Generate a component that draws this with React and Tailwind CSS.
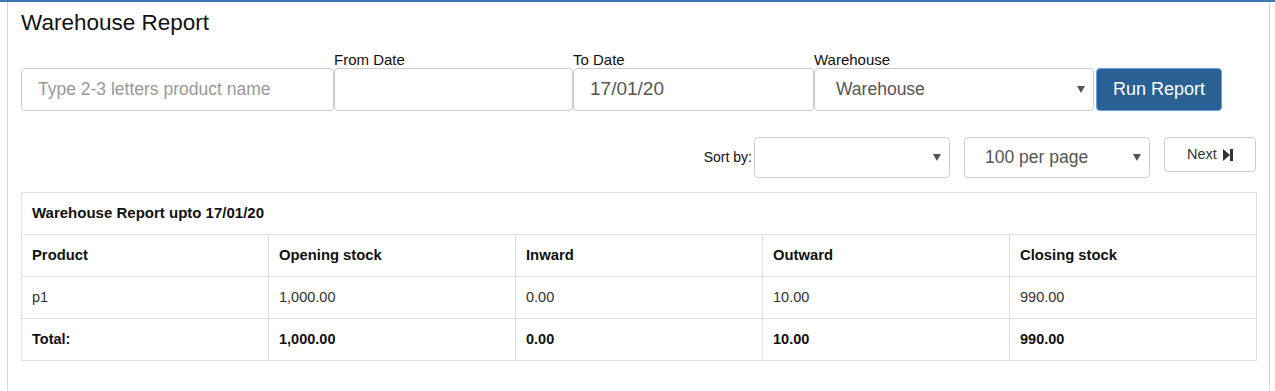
import React from "react";

function Arrow() {
  return (
    <svg width="8" height="7" viewBox="0 0 8 7" className="shrink-0">
      <polygon points="0,0 8,0 4,7" fill="#555" />
    </svg>
  );
}

function StepForward() {
  return (
    <svg width="10" height="12" viewBox="0 0 10 12" className="shrink-0">
      <polygon points="0,0 7,6 0,12" fill="#333" />
      <rect x="7" y="0" width="3" height="12" fill="#333" />
    </svg>
  );
}

const rows = [
  ["p1", "1,000.00", "0.00", "10.00", "990.00"],
];

export default function App() {
  return (
    <div className="w-[1275px] h-[391px] bg-white font-['Liberation_Sans',Arial,sans-serif] text-[#333] overflow-hidden">
      <div className="h-[2px] bg-[#3c78b4]" />
      <div className="ml-[7px] w-[1263px] h-[389px] border-x border-[#d2d6de] pl-[13px] pr-[11px]">
        <div className="pt-[7px] text-[22.5px] leading-[28px] text-[#111]">Warehouse Report</div>

        <div className="mt-[14px] flex items-end">
          <div className="w-[313px] h-[43px] border border-[#ccc] rounded-[4px] flex items-center pl-[16px] text-[17.5px] text-[#999]">
            Type 2-3 letters product name
          </div>
          <div className="w-[239px] flex flex-col">
            <div className="text-[15px] leading-[17px] text-[#111]">From Date</div>
            <div className="h-[43px] border border-[#ccc] rounded-[4px]" />
          </div>
          <div className="w-[241px] flex flex-col">
            <div className="text-[15px] leading-[17px] text-[#111]">To Date</div>
            <div className="h-[43px] border border-[#ccc] rounded-[4px] flex items-center pl-[16px] text-[19px] text-[#555]">
              17/01/20
            </div>
          </div>
          <div className="w-[280px] flex flex-col">
            <div className="text-[15px] leading-[17px] text-[#111]">Warehouse</div>
            <div className="h-[43px] border border-[#ccc] rounded-[4px] flex items-center justify-between pl-[21px] pr-[8px] text-[17.5px] text-[#555]">
              <span>Warehouse</span>
              <Arrow />
            </div>
          </div>
          <div className="ml-[2px] w-[126px] h-[43px] rounded-[4px] bg-[#2a6194] border border-[#66a0e6] flex items-center justify-center text-white text-[18px]">
            Run Report
          </div>
        </div>

        <div className="mt-[26px] flex justify-end items-start pr-[2px]">
          <div className="flex items-center">
            <span className="text-[14px] text-[#111] mr-[2px]">Sort by:</span>
            <div className="w-[196px] h-[41px] border border-[#ccc] rounded-[4px] flex items-center justify-end pr-[8px]">
              <Arrow />
            </div>
          </div>
          <div className="ml-[14px] w-[186px] h-[41px] border border-[#ccc] rounded-[4px] flex items-center justify-between pl-[20px] pr-[8px] text-[17.5px] text-[#555]">
            <span>100 per page</span>
            <Arrow />
          </div>
          <div className="ml-[14px] w-[92px] h-[35px] border border-[#ccc] rounded-[4px] flex items-center justify-center gap-[6px] text-[14.5px] text-[#333]">
            <span>Next</span>
            <StepForward />
          </div>
        </div>

        <table className="mt-[14px] w-[1236px] table-fixed border-collapse text-[14.5px]">
          <tbody>
            <tr>
              <th colSpan={5} className="h-[42px] border border-[#ddd] px-[10px] text-left font-bold text-[15px] text-[#111]">
                Warehouse Report upto 17/01/20
              </th>
            </tr>
            <tr>
              {["Product", "Opening stock", "Inward", "Outward", "Closing stock"].map((h) => (
                <th key={h} className="h-[42px] border border-[#ddd] px-[10px] text-left font-bold text-[14.8px] text-[#111]">
                  {h}
                </th>
              ))}
            </tr>
            {rows.map((r, i) => (
              <tr key={i}>
                {r.map((c, j) => (
                  <td key={j} className="h-[42px] border border-[#ddd] px-[10px] text-left text-[#333]">
                    {c}
                  </td>
                ))}
              </tr>
            ))}
            <tr>
              {["Total:", "1,000.00", "0.00", "10.00", "990.00"].map((c, j) => (
                <td key={j} className="h-[42px] border border-[#ddd] px-[10px] text-left font-bold text-[#111]">
                  {c}
                </td>
              ))}
            </tr>
          </tbody>
        </table>
      </div>
    </div>
  );
}
